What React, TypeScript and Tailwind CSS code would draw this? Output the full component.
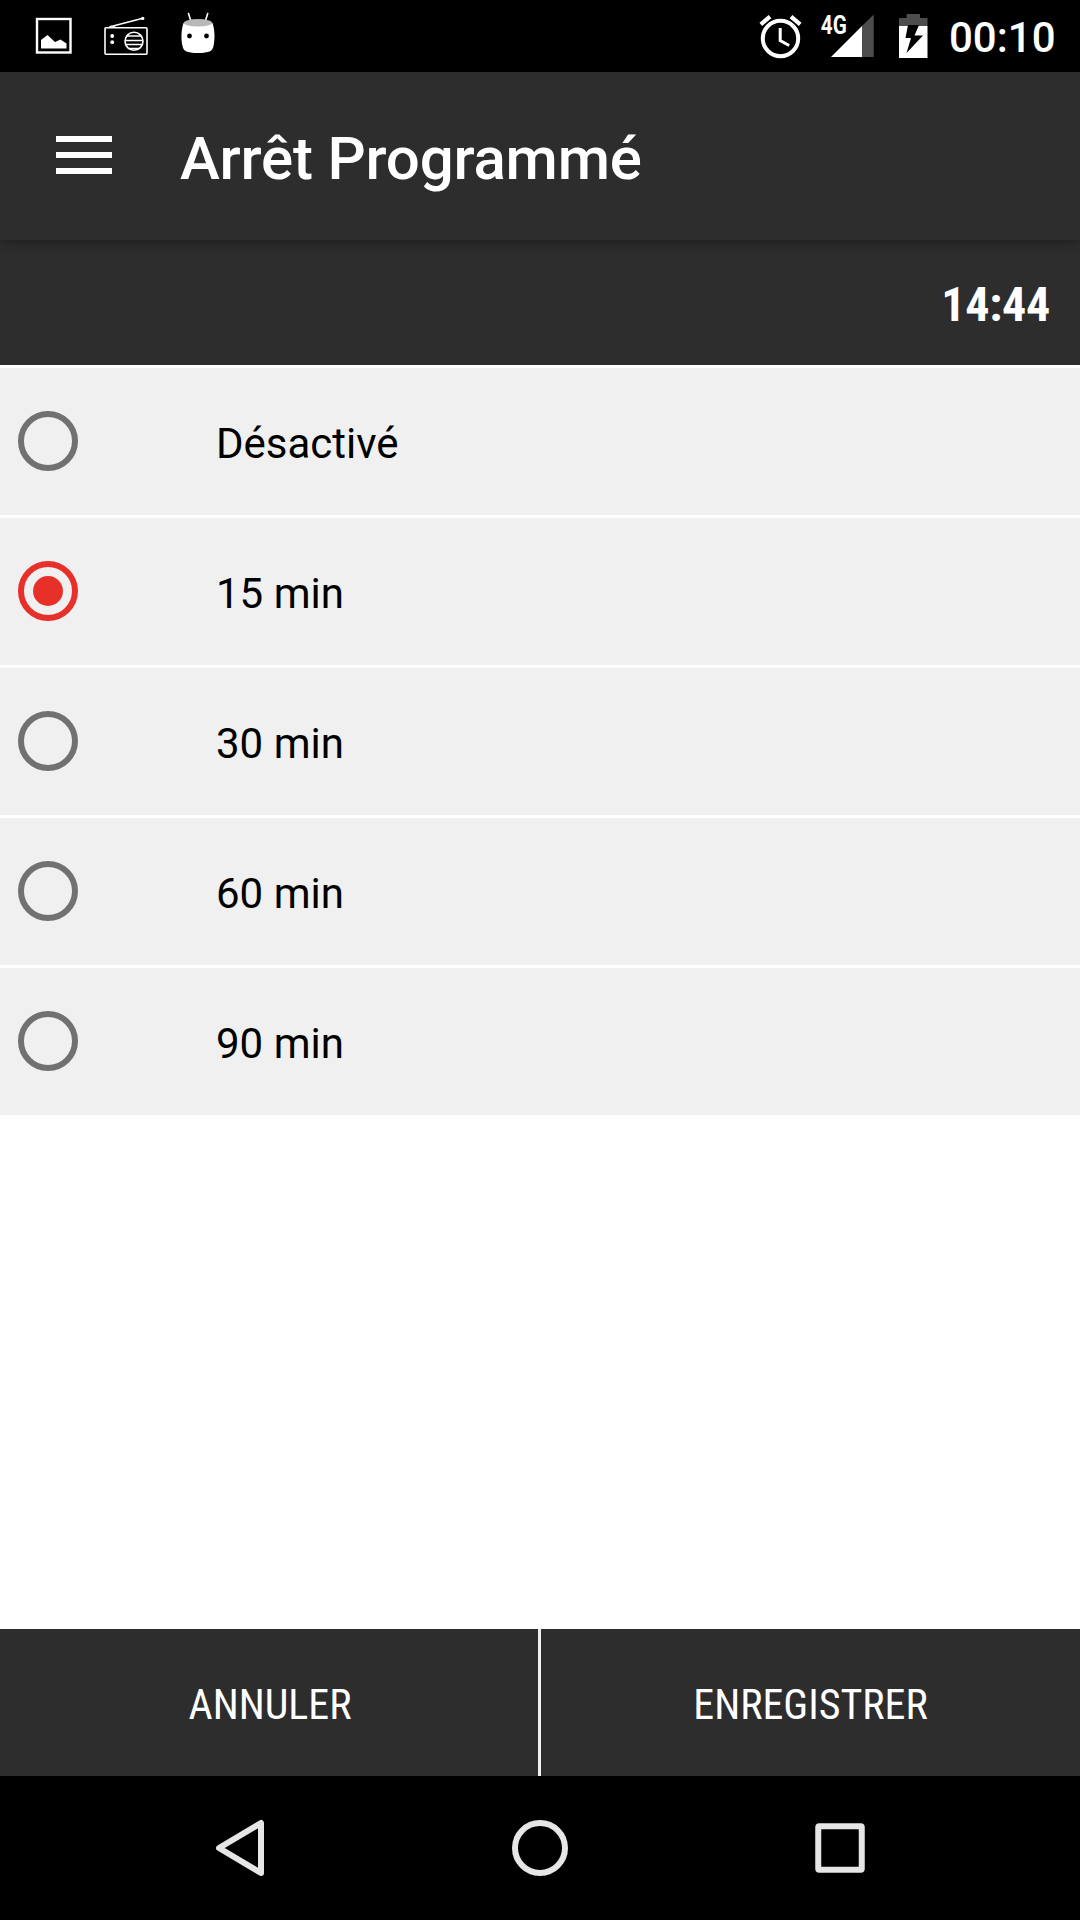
import React from "react";

const options = ["Désactivé", "15 min", "30 min", "60 min", "90 min"];

function StatusBar() {
  return (
    <header className="flex h-[72px] shrink-0 items-start justify-between bg-black text-white">
      <svg width="260" height="72" viewBox="0 0 260 72" fill="none">
        <rect x="37" y="19" width="33.500" height="33.500" stroke="#fff" strokeWidth="2.400" />
        <path d="M41 48.500V40l6.500-5 7.500 7 5.500-2.500 6 4v5z" fill="#fff" />
        <g stroke="#fff" strokeWidth="1.600">
          <rect x="105" y="27.800" width="42" height="26.400" rx="1" />
          <path d="M109 27.500q3-3 6 0M113 26L142 18.500" />
          <circle cx="134" cy="41.200" r="9" />
          <path d="M127 36h14M125.500 40.500h17M126 44.500h16M129 48.500h10" />
        </g>
        <circle cx="142.700" cy="18.400" r="1.700" fill="#fff" />
        <circle cx="112.200" cy="36" r="1.900" fill="#fff" />
        <circle cx="112.200" cy="42.200" r="1.900" fill="#fff" />
        <path d="M188.500 13.500l2.500 8M207.700 13.500l-2.500 8" stroke="#fff" strokeWidth="1.600" strokeLinecap="round" />
        <path d="M183.500 23C181 30 181 40 182.500 46c1 5 4 7 15.500 7s14.500-2 15.500-7c1.500-6 1.500-16-1-23z" fill="#fff" />
        <ellipse cx="198" cy="22.800" rx="14.200" ry="3.700" fill="#b8b8b8" />
        <circle cx="189.500" cy="36" r="2.400" fill="#000" />
        <circle cx="206.500" cy="36" r="2.400" fill="#000" />
      </svg>
      <div className="flex h-[72px] items-center">
        <svg width="209" height="72" viewBox="740 0 209 72" fill="none">
          <circle cx="780.500" cy="38.500" r="17.700" stroke="#fff" strokeWidth="4" />
          <path d="M780.200 28v12.500l9 5" stroke="#fff" strokeWidth="3" />
          <path d="M760.800 24.300l9.200-7.600M800.200 24.300l-9.200-7.600" stroke="#fff" strokeWidth="4.200" />
          <path d="M873.700 14.500V57H862V26z" fill="#4d4d4d" />
          <path d="M862 26v31h-31z" fill="#fff" />
          <path d="M899 26v-8h7.500v-4h13.500v4h7.500v8z" fill="#4d4d4d" />
          <path d="M899 26h28.500v32H899z" fill="#fff" />
          <path d="M908 25h11l-4.500 10.500h8.500L906.500 53l4.500-15h-5.500z" fill="#000" />
          <text x="820.800" y="33.500" fill="#fff" fontFamily="Roboto" fontSize="25" fontWeight="700" textLength="26" lengthAdjust="spacingAndGlyphs">4G</text>
        </svg>
        <span className="w-[131px] pt-[3px] text-[42px] leading-[72px] font-medium">00:10</span>
      </div>
    </header>
  );
}

function Radio({ checked }: { checked: boolean }) {
  return (
    <span
      className={
        checked
          ? "mb-[2px] flex size-[60px] items-center justify-center rounded-full border-[6px] border-[#e8302a]"
          : "mb-[2px] flex size-[60px] rounded-full border-[6px] border-[#717171]"
      }
    >
      {checked && <span className="size-[30px] rounded-full bg-[#e8302a]" />}
    </span>
  );
}

export default function App() {
  return (
    <div className="flex h-[1920px] w-[1080px] flex-col overflow-hidden bg-white font-['Roboto',sans-serif]">
      <StatusBar />
      <div className="relative z-10 flex h-[168px] shrink-0 items-center bg-[#2d2d2d] shadow-[0_3px_10px_rgba(0,0,0,0.3)]">
        <button className="-mt-[2px] ml-[56px] flex w-[56px] flex-col gap-[10px]">
          <span className="h-[6px] bg-white" />
          <span className="h-[6px] bg-white" />
          <span className="h-[6px] bg-white" />
        </button>
        <h1 className="mt-[6px] ml-[68px] text-[60px] leading-[72px] font-medium tracking-[-0.2px] text-white">Arrêt Programmé</h1>
      </div>
      <div className="flex h-[125px] shrink-0 items-center justify-end bg-[#2d2d2d] pt-[4px] pr-[30px]">
        <span className="font-['Roboto_Condensed','Roboto',sans-serif] text-[48px] leading-[56px] font-bold tracking-[-0.3px] text-white [font-stretch:75%]">14:44</span>
      </div>
      <ul className="mt-[3px] flex flex-col gap-[3px]">
        {options.map((label, i) => (
          <li key={label} className="flex h-[147px] items-center bg-[#f0f0f0] pl-[18px]">
            <Radio checked={i === 1} />
            <span className="mt-[4px] ml-[138px] text-[42px] leading-[50px] text-black">{label}</span>
          </li>
        ))}
      </ul>
      <footer className="mt-auto flex shrink-0 flex-col">
        <div className="flex h-[147px] gap-[3px] bg-[#f0f0f0] font-['Roboto_Condensed','Roboto',sans-serif] text-[42px] text-white [font-stretch:75%]">
          <button className="w-[538px] bg-[#2d2d2d] pt-[4px] pl-[2px]">ANNULER</button>
          <button className="w-[539px] bg-[#2d2d2d] pt-[4px]">ENREGISTRER</button>
        </div>
        <nav className="flex h-[144px] items-center justify-between bg-black px-[210px]">
          <svg width="60" height="60" viewBox="210 1818 60 60" fill="none" stroke="#e6e6e6" strokeWidth="6" strokeLinejoin="round">
            <path d="M219 1848L261 1823v50z" />
          </svg>
          <svg width="60" height="60" viewBox="0 0 60 60" fill="none" stroke="#e6e6e6" strokeWidth="6">
            <circle cx="30" cy="30" r="25" />
          </svg>
          <svg width="60" height="60" viewBox="0 0 60 60" fill="none" stroke="#e6e6e6" strokeWidth="6" strokeLinejoin="round">
            <rect x="8.250" y="8.250" width="43.500" height="43.500" rx="1" />
          </svg>
        </nav>
      </footer>
    </div>
  );
}
